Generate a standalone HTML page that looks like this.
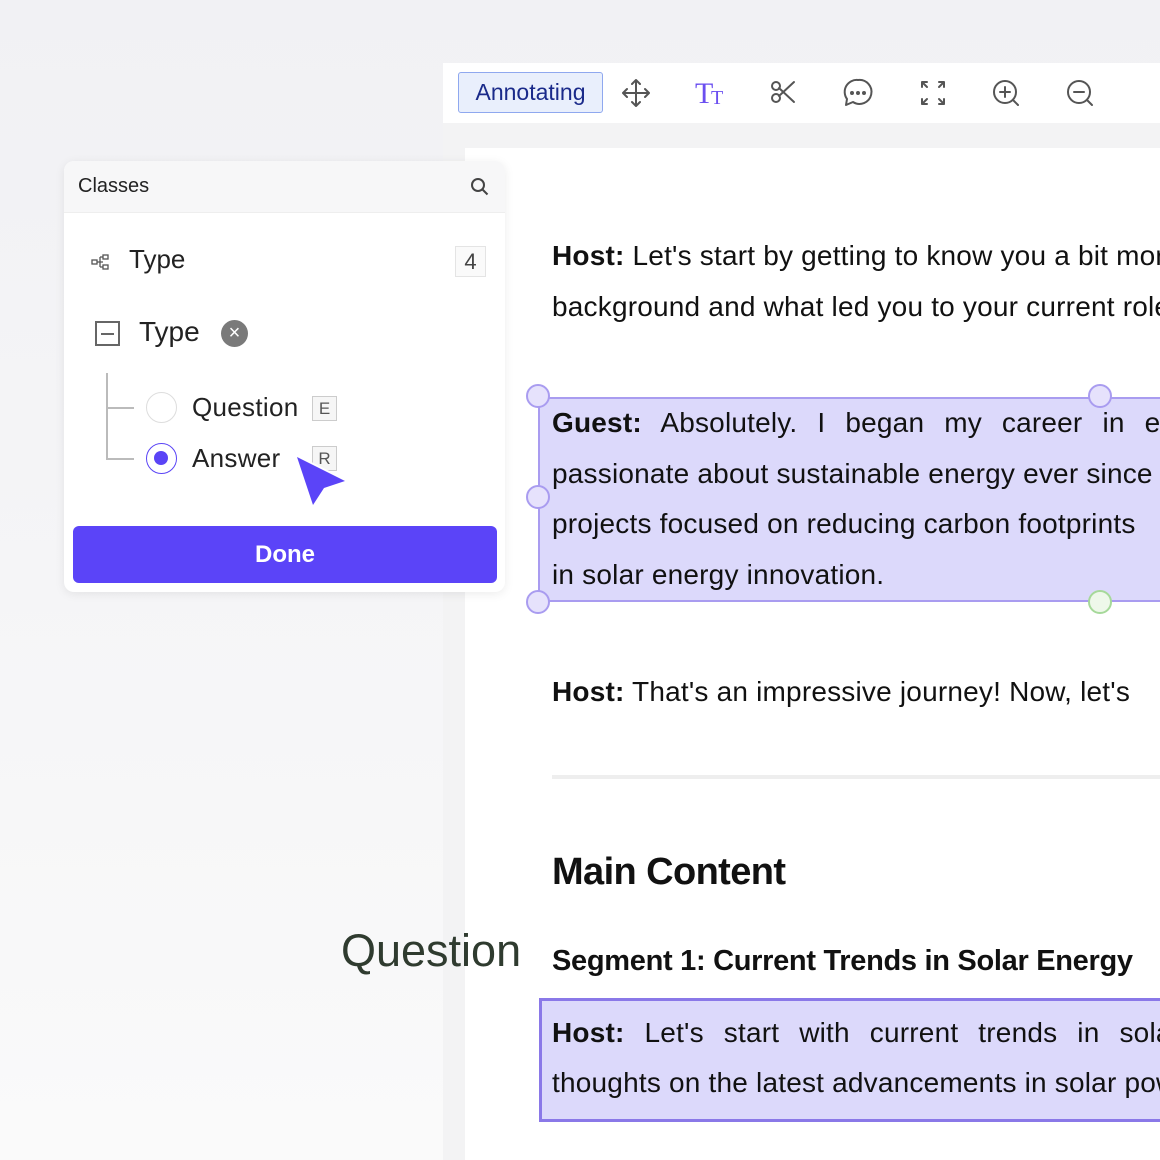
<!DOCTYPE html>
<html><head><meta charset="utf-8"><style>
*{margin:0;padding:0;box-sizing:border-box}
html,body{width:1160px;height:1160px;overflow:hidden}
body{position:relative;font-family:"Liberation Sans",sans-serif;background:linear-gradient(180deg,#f1f1f4 0%,#f5f5f7 50%,#fafafa 100%)}
.abs{position:absolute}
.clip{position:absolute;left:0;top:0;width:1160px;height:1160px;overflow:hidden}
.toolbar{left:443px;top:63px;width:717px;height:60px;background:#fff}
.gray{left:443px;top:123px;width:717px;height:1037px;background:#f3f3f4}
.page{left:465px;top:148px;width:695px;height:1012px;background:#fff}
.ann{left:458px;top:72px;width:145px;height:41px;border:1.5px solid #8fa8ef;background:#e9effc;border-radius:3px;color:#1a2a8a;font-size:23px;line-height:38px;text-align:center}
.line{position:absolute;left:552px;width:608px;overflow:hidden;font-size:28px;color:#111;white-space:nowrap;letter-spacing:0.2px}
.hl{position:absolute;background:#dcd9fb}
.h{position:absolute;width:24px;height:24px;border-radius:50%;border:2px solid #a99cf0;background:#e6e2fc}
.panel{left:64px;top:161px;width:441px;height:431px;background:#fff;border-radius:10px;box-shadow:0 2px 10px rgba(0,0,0,.08);overflow:hidden}
</style></head><body>
<div class="clip">
<div class="abs gray"></div>
<div class="abs toolbar"></div>
<div class="abs page"></div>
<div class="abs ann">Annotating</div>
<svg class="abs" style="left:610px;top:70px" width="500" height="46" fill="none" stroke="#555" stroke-width="2" stroke-linecap="round" stroke-linejoin="round">
<path d="M26 10v26M13 23h26M22 14l4-4 4 4M22 32l4 4 4-4M17 19l-4 4 4 4M35 19l4 4-4 4"/>
<text x="85" y="33" font-family="Liberation Serif,serif" font-size="30" fill="#6b4ff0" stroke="none">T</text><text x="101" y="34" font-family="Liberation Serif,serif" font-size="20" fill="#6b4ff0" stroke="none">T</text>
<circle cx="166" cy="28" r="4"/><circle cx="166" cy="16" r="4"/><path d="M169 26l15-14M169 18l15 14"/>
<path d="M248 10a12 12 0 1 1-5 22l-7 3 1-6a12 12 0 0 1 11-19z"/><circle cx="242" cy="23" r="1" fill="#555"/><circle cx="248" cy="23" r="1" fill="#555"/><circle cx="254" cy="23" r="1" fill="#555"/>
<path d="M312 17v-5h5M312 12l5 5M334 17v-5h-5M334 12l-5 5M312 29v5h5M312 34l5-5M334 29v5h-5M334 34l-5-5"/>
<circle cx="395" cy="22" r="11"/><path d="M403 30l5 5M395 17v10M390 22h10"/>
<circle cx="469" cy="22" r="11"/><path d="M477 30l5 5M464 22h10"/>
</svg>

<div class="line" style="top:240px"><b>Host:</b> Let's start by getting to know you a bit more</div>
<div class="line" style="top:291px">background and what led you to your current role</div>

<div class="hl" style="left:538px;top:397px;width:622px;height:205px;border:2px solid #a99cf0;border-right:none"></div>
<div class="line" style="top:407px;word-spacing:12px"><b>Guest:</b> Absolutely. I began my career in energy</div>
<div class="line" style="top:458px">passionate about sustainable energy ever since</div>
<div class="line" style="top:508px">projects focused on reducing carbon footprints</div>
<div class="line" style="top:559px">in solar energy innovation.</div>
<div class="h" style="left:526px;top:384px"></div>
<div class="h" style="left:1088px;top:384px"></div>
<div class="h" style="left:526px;top:485px"></div>
<div class="h" style="left:526px;top:590px"></div>
<div class="h" style="left:1088px;top:590px;border-color:#a6d99a;background:#eef8ea"></div>

<div class="line" style="top:676px"><b>Host:</b> That's an impressive journey! Now, let's</div>
<div class="abs" style="left:552px;top:775px;width:608px;height:4px;background:#eeeeee"></div>
<div class="line" style="top:851px;height:46px;font-size:38px;font-weight:bold;letter-spacing:-0.6px">Main Content</div>
<div class="line" style="top:945px;font-size:29px;font-weight:bold;letter-spacing:-0.3px">Segment 1: Current Trends in Solar Energy</div>
<div class="abs" style="left:341px;top:925px;font-size:45px;color:#2f3b2f">Question</div>
<div class="hl" style="left:539px;top:998px;width:621px;height:124px;border:3px solid #8a78e8;border-right:none"></div>
<div class="line" style="top:1017px;word-spacing:12px"><b>Host:</b> Let's start with current trends in solar</div>
<div class="line" style="top:1067px">thoughts on the latest advancements in solar power</div>

<div class="abs panel">
 <div style="height:52px;background:#f7f7f8;border-bottom:1px solid #eee;position:relative">
  <div style="position:absolute;left:14px;top:14px;font-size:20px;color:#222">Classes</div>
  <svg style="position:absolute;left:406px;top:16px" width="20" height="20" fill="none" stroke="#444" stroke-width="2"><circle cx="8" cy="8" r="6"/><path d="M12.5 12.5l5 5"/></svg>
 </div>
 <svg style="position:absolute;left:27px;top:92px" width="20" height="18" fill="none" stroke="#555" stroke-width="1.3"><rect x="1" y="7" width="5" height="4"/><rect x="12" y="2" width="5" height="4"/><rect x="12" y="12" width="5" height="4"/><path d="M6 9h3M9 4v10M9 4h3M9 14h3M9 9h3"/></svg>
 <div style="position:absolute;left:65px;top:83px;font-size:26px;color:#222">Type</div>
 <div style="position:absolute;left:391px;top:85px;width:31px;height:31px;border:1px solid #e4e4e4;background:#fafafa;text-align:center;font-size:22px;line-height:30px;color:#444">4</div>
 <div style="position:absolute;left:31px;top:160px;width:25px;height:25px;border:2px solid #666"><div style="position:absolute;left:4px;top:10px;width:13px;height:2px;background:#666"></div></div>
 <div style="position:absolute;left:75px;top:155px;font-size:28px;color:#222">Type</div>
 <div style="position:absolute;left:157px;top:159px;width:27px;height:27px;border-radius:50%;background:#7a7a7a;color:#fff;text-align:center;font-size:20px;line-height:26px">×</div>
 <div style="position:absolute;left:42px;top:212px;width:28px;height:87px;border-left:2px solid #bbb;border-bottom:2px solid #bbb"></div>
 <div style="position:absolute;left:42px;top:246px;width:28px;height:2px;background:#bbb"></div>
 <div style="position:absolute;left:82px;top:231px;width:31px;height:31px;border-radius:50%;border:1.5px solid #ddd"></div>
 <div style="position:absolute;left:128px;top:231px;font-size:26px;color:#222;letter-spacing:0.3px">Question</div>
 <div style="position:absolute;left:248px;top:235px;width:25px;height:25px;border:1px solid #ccc;background:#f6f6f6;font-size:17px;text-align:center;line-height:24px;color:#555">E</div>
 <div style="position:absolute;left:82px;top:282px;width:31px;height:31px;border-radius:50%;border:1.5px solid #5a44f6"><div style="position:absolute;left:7px;top:7px;width:14px;height:14px;border-radius:50%;background:#5a44f6"></div></div>
 <div style="position:absolute;left:128px;top:282px;font-size:26px;color:#222;letter-spacing:0.3px">Answer</div>
 <div style="position:absolute;left:248px;top:285px;width:25px;height:25px;border:1px solid #ccc;background:#f6f6f6;font-size:17px;text-align:center;line-height:24px;color:#555">R</div>
 <div style="position:absolute;left:9px;top:365px;width:424px;height:57px;background:#5b44f8;border-radius:6px;color:#fff;font-size:24px;font-weight:bold;text-align:center;line-height:57px">Done</div>
</div>
<svg class="abs" style="left:0;top:0" width="1160" height="1160"><path d="M297 457L345 481L324 488L313 505Z" fill="#5b44f8" stroke="#fff" stroke-width="4" stroke-linejoin="round" paint-order="stroke"/></svg>
</div>
</body></html>
